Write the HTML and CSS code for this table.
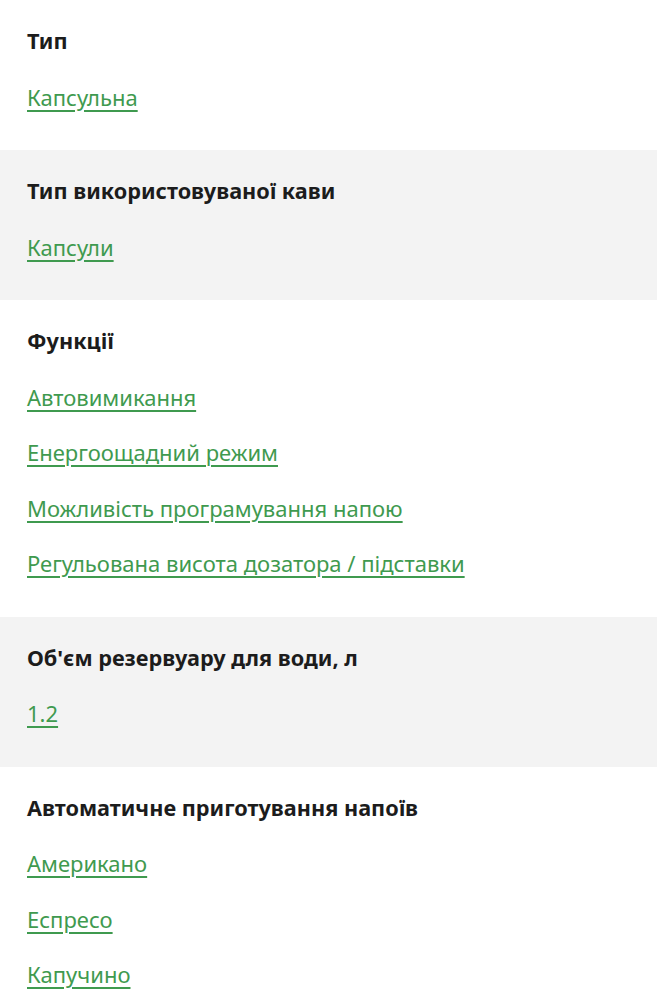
FILE: index.html
```html
<!DOCTYPE html>
<html lang="uk">
<head>
<meta charset="utf-8">
<link rel="stylesheet" href="styles.css">
</head>
<body>
<div class="specs">
  <section class="spec">
    <div class="spec-title">Тип</div>
    <a class="spec-link" href="#">Капсульна</a>
  </section>
  <section class="spec alt">
    <div class="spec-title">Тип використовуваної кави</div>
    <a class="spec-link" href="#">Капсули</a>
  </section>
  <section class="spec">
    <div class="spec-title">Функції</div>
    <a class="spec-link" href="#">Автовимикання</a>
    <a class="spec-link" href="#">Енергоощадний режим</a>
    <a class="spec-link" href="#">Можливість програмування напою</a>
    <a class="spec-link" href="#">Регульована висота дозатора / підставки</a>
  </section>
  <section class="spec alt">
    <div class="spec-title">Об'єм резервуару для води, л</div>
    <a class="spec-link" href="#">1.2</a>
  </section>
  <section class="spec">
    <div class="spec-title">Автоматичне приготування напоїв</div>
    <a class="spec-link" href="#">Американо</a>
    <a class="spec-link" href="#">Еспресо</a>
    <a class="spec-link" href="#">Капучино</a>
  </section>
</div>
</body>
</html>
```

FILE: styles.css
```css
* { box-sizing: border-box; }
html, body { margin: 0; padding: 0; background: #ffffff; }
body { font-family: "Noto Sans", sans-serif; }
.specs { display: flex; flex-direction: column; }
.spec {
  display: flex;
  flex-direction: column;
  align-items: flex-start;
  gap: 27.5px;
  padding: 27px 27px 39.5px;
  background: #ffffff;
}
.spec.alt { background: #f3f3f3; }
.spec-title {
  font-size: 21.7px;
  line-height: 28px;
  font-weight: 700;
  color: #1c1c1c;
}
.spec-link {
  font-size: 22px;
  line-height: 28px;
  color: #3f9a4f;
  text-decoration: underline;
  text-decoration-thickness: 1.5px;
  text-underline-offset: 4px;
}
```
